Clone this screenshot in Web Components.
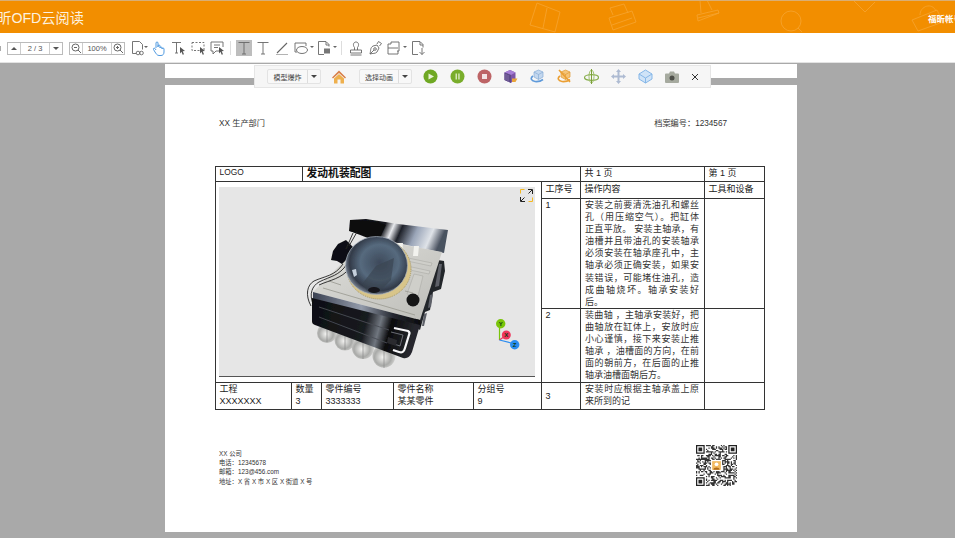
<!DOCTYPE html>
<html lang="zh">
<head>
<meta charset="utf-8">
<title>福昕OFD云阅读</title>
<style>
  html, body { margin: 0; height: 100%; overflow: hidden; }
  body { font-family: "Liberation Sans", "Noto Sans CJK SC", sans-serif; }
</style>
</head>
<body>
<ofd-app>
  <ofd-header slot="top" title-text="福昕OFD云阅读" account="福昕帐号登录"></ofd-header>
  <ofd-toolbar slot="top"></ofd-toolbar>
  <doc-area slot="main">
    <model-toolbar slot="overlay"></model-toolbar>
    <doc-page></doc-page>
  </doc-area>
</ofd-app>

<script>
const FONT = '"Liberation Sans", "Noto Sans CJK SC", sans-serif';

class OfdApp extends HTMLElement {
    constructor() {
        super();
        this.attachShadow({mode: 'open'}).innerHTML = `
        <style>
          :host { display: flex; flex-direction: column; width: 955px; height: 538px; overflow: hidden; font-family: ${FONT}; }
          .main { flex: 1; min-height: 0; }
        </style>
        <slot name="top"></slot>
        <div class="main"><slot name="main"></slot></div>`;
    }
}

class OfdHeader extends HTMLElement {
    constructor() {
        super();
        this.attachShadow({mode: 'open'}).innerHTML = `
        <style>
          :host { display: flex; align-items: center; justify-content: space-between; position: relative; height: 32px;
                  background: #f28e00; border-top: 1px solid #d9ae74; overflow: hidden; color: #fff; }
          .title { font-size: 14.200px; margin-left: -17px; white-space: nowrap; color: #fdf1df; }
          .account { font-size: 8.500px; font-weight: bold; white-space: nowrap; position: absolute; left: 928px; top: 11px; }
          svg { position: absolute; left: 0; top: -1px; }
        </style>
        <svg width="955" height="33" fill="none" stroke="#f6a531" stroke-width=".8">
          <path d="M537 3 560 12 555 32 530 25ZM547 8 543 28"/>
          <path d="M609 18 632 11 636 22 613 30ZM613 15 610 8 624 4 628 13M612 25 632 18"/>
          <path d="M697 15 718 10 719 13 698 21ZM698 18 719 13M701 13 700 0M712 10 707 0"/>
          <circle cx="791" cy="21" r="10"/><path d="M798 28 802 32"/>
          <path d="M853 0 865 12 875 2"/>
          <path d="M912 20 937 10 943 22 918 31ZM920 15C920 6 932 2 936 11"/>
        </svg>
        <span class="title">${this.getAttribute('title-text')}</span>
        <span class="account">${this.getAttribute('account')}</span>`;
    }
}

const CURSOR = '<path fill="#555" stroke="none" d="M10 7l5 4-2.300.3 1.300 3-1.300.5-1.200-3L10 13.500z"/>';
const ICON = {
    link: '<path d="M1.500 1.500h7l3 3v5M1.500 1.500v12h3.500"/><circle cx="7" cy="13" r="1.800"/><circle cx="10.500" cy="13" r="1.800"/>',
    hand: '<path stroke="#3d8fdc" d="M5 8V3a1 1 0 0 1 2 0v4M7 7V6a1 1 0 0 1 2 0v2M9 8a1 1 0 0 1 2 0v1M11 9a1 1 0 0 1 2 0v3c0 2-1 3.500-3 3.500H8c-2 0-3-2-4-3.500L2.500 9.500C2 8.500 3 7.700 4 8.500L5 10"/>',
    textSel: '<path d="M2 2.500h9M6.500 2.500V13M5 13h3"/>' + CURSOR,
    boxSel: '<path stroke-dasharray="2 1.500" d="M2 2.500h12v8H2z"/>' + CURSOR,
    comment: '<path d="M2 2h12v5M10 11H7l-3 3v-3H2V2"/><path d="M5 5h6M5 7.500h4"/>' + CURSOR,
    textBig: '<path d="M2.500 2.500h11M8 2.500V14M6 14h4"/>',
    pen: '<path stroke-width="1.100" d="M3 13 13 3"/><path stroke="#aaa" d="M2 14.500h12"/>',
    shape: '<path d="M2 3h11v3M2 3v9h2"/><ellipse cx="9" cy="10" rx="5.500" ry="3.500"/>',
    docStamp: '<path d="M8 14.500H2.500V1.500H10l3 3v2"/><path d="M10 2v3h3"/><path fill="#777" stroke="none" d="M8 8.500h6v5H8z"/>',
    stamp: '<path d="M6.500 7.500C4.500 5 5.500 2 8 2s3.500 3 1.500 5.500V10M6.500 7.500V10"/><path d="M2.500 10h11v3h-11zM2.500 15h11"/>',
    sign: '<path d="M3 14c1-4 0-6 3-8l4-1 2 3-2 4c-2 2-4 1-7 2z"/><circle cx="8" cy="9" r="1.300"/><path d="M10 4l1.500-2.500 3 2-2 2.500M3 14l4-4"/>',
    attach: '<path d="M5 4H2v10h10v-3M5 4V2h8v9h-2"/><path d="M2 8h10"/>',
    docDown: '<path d="M8 14.500H2.500V1.500H10l3 3v3"/><path d="M10 2v3h3"/><path d="M12 8v6.500M9.500 12l2.500 2.500 2.500-2.500"/>'
};

class ToolIcon extends HTMLElement {
    constructor() {
        super();
        const name = this.getAttribute('name');
        const caret = this.hasAttribute('caret');
        this.attachShadow({mode: 'open'}).innerHTML = `
        <style>
          :host { display: flex; align-items: center; height: 16px; flex: none; }
          svg { display: block; }
          .caret { width: 0; height: 0; border: 2px solid transparent; border-top: 2px solid #666; border-bottom: 0; margin: 0 0 3px 1px; }
          :host([name="link"]) .caret { margin-left: -3px; }
          :host([active]) svg { background: #bdbdbd; }
        </style>
        <svg width="16" height="16" viewBox="0 0 16 16" fill="none" stroke="#666" stroke-width=".9">${ICON[name]}</svg>
        ${caret ? '<span class="caret"></span>' : ''}`;
    }
}

class OfdToolbar extends HTMLElement {
    constructor() {
        super();
        this.attachShadow({mode: 'open'}).innerHTML = `
        <style>
          :host { display: flex; align-items: center; height: 30px; box-sizing: border-box; background: #fff; border-bottom: 1px solid #e3e3e3; padding-top: 1px; flex: none; font-size: 7.500px; color: #555; }
          .sliver { width: 1px; height: 5px; background: #aaa; margin-right: 6px; }
          .spin { display: flex; align-items: stretch; height: 13px; width: 56px; border: 1px solid #bbb; box-sizing: border-box; }
          .spin + .spin { margin-left: 6px; }
          .spin > * { display: flex; align-items: center; justify-content: center; }
          .spin .v { flex: 1; border-left: 1px solid #ccc; border-right: 1px solid #ccc; }
          .spin .b { width: 12px; flex: none; }
          .up { width: 0; height: 0; border: 3px solid transparent; border-bottom: 3px solid #555; border-top: 0; }
          .dn { width: 0; height: 0; border: 3px solid transparent; border-top: 3px solid #555; border-bottom: 0; }
          .sep { width: 1px; height: 14px; background: #ddd; flex: none; }
          tool-icon { margin-left: 3px; }
          .b svg { display: block; }
        </style>
        <span class="sliver"></span>
        <div class="spin"><span class="b"><i class="up"></i></span><span class="v">2 / 3</span><span class="b"><i class="dn"></i></span></div>
        <div class="spin">
          <span class="b"><svg width="10" height="10" fill="none" stroke="#666"><circle cx="4.500" cy="4.500" r="3.500"/><path d="M7 7l3 3M3 4.500h3"/></svg></span>
          <span class="v">100%</span>
          <span class="b"><svg width="10" height="10" fill="none" stroke="#666"><circle cx="4.500" cy="4.500" r="3.500"/><path d="M7 7l3 3M3 4.500h3M4.500 3v3"/></svg></span>
        </div>
        <tool-icon name="link" caret style="margin-left:6px"></tool-icon>
        <tool-icon name="hand" style="margin-left:3px"></tool-icon>
        <tool-icon name="textSel"></tool-icon>
        <tool-icon name="boxSel" style="margin-left:4px"></tool-icon>
        <tool-icon name="comment"></tool-icon>
        <span class="sep" style="margin-left:5px"></span>
        <tool-icon name="textBig" active style="margin-left:5px"></tool-icon>
        <tool-icon name="textBig"></tool-icon>
        <tool-icon name="pen"></tool-icon>
        <tool-icon name="shape" caret></tool-icon>
        <tool-icon name="docStamp" caret style="margin-left:2px"></tool-icon>
        <span class="sep" style="margin-left:4px"></span>
        <tool-icon name="stamp" style="margin-left:6px"></tool-icon>
        <tool-icon name="sign"></tool-icon>
        <tool-icon name="attach" caret></tool-icon>
        <tool-icon name="docDown" style="margin-left:3px"></tool-icon>`;
    }
}

class DocArea extends HTMLElement {
    constructor() {
        super();
        this.attachShadow({mode: 'open'}).innerHTML = `
        <style>
          :host { display: block; position: relative; height: 100%; background: #a9a9a9; overflow: hidden; }
          .prev { width: 632px; height: 14px; margin: 1px 0 7px 165px; background: #fff; }
          ::slotted(doc-page) { margin-left: 165px; }
          ::slotted(model-toolbar) { position: absolute; left: 254px; top: 2px; z-index: 2; }
        </style>
        <slot name="overlay"></slot>
        <div class="prev"></div>
        <slot></slot>`;
    }
}

class ModelToolbar extends HTMLElement {
    constructor() {
        super();
        this.attachShadow({mode: 'open'}).innerHTML = `
        <style>
          :host { display: flex; align-items: center; width: 457px; height: 23px; box-sizing: border-box; background: #f6f6f6; border: 1px solid #e6e6e6; padding-left: 12px; font-size: 7px; color: #444; }
          .drop { display: flex; align-items: stretch; height: 15px; border: 1px solid #e3e3e3; border-radius: 2px; background: #f8f8f8; flex: none; box-sizing: border-box; }
          .drop span { display: flex; align-items: center; justify-content: center; }
          .drop .t { width: 39px; }
          .drop .c { width: 12px; border-left: 1px solid #ddd; }
          .drop i { width: 0; height: 0; border: 3px solid transparent; border-top: 3px solid #444; border-bottom: 0; }
          svg { display: block; flex: none; margin-left: 12px; }
        </style>
        <div class="drop"><span class="t">模型爆炸</span><span class="c"><i></i></span></div>
        <svg width="14" height="14" viewBox="0 0 14 14" style="margin-left:11px"><path fill="#d9804a" d="M7 .5 0 7.500l1 1L7 3l6 5.500 1-1z"/><path fill="#eeb04e" d="M2 8.500 7 4l5 4.500V13.500H8.500V9.500h-3v4H2z"/></svg>
        <div class="drop" style="margin-left:13px"><span class="t" style="width:38px">选择动画</span><span class="c"><i></i></span></div>
        <svg width="15" height="15" viewBox="0 0 15 15" style="margin-left:11px"><circle cx="7.500" cy="7.500" r="7" fill="#6fa823"/><path fill="#e8f2d6" d="M5.500 4.500 11 7.500 5.500 10.500z"/></svg>
        <svg width="15" height="15" viewBox="0 0 15 15"><circle cx="7.500" cy="7.500" r="7" fill="#79ad2b"/><path fill="#d5e6b8" d="M5.500 4.500H7v6H5.500zM8.200 4.500h1.500v6H8.200z"/></svg>
        <svg width="15" height="15" viewBox="0 0 15 15"><circle cx="7.500" cy="7.500" r="7" fill="#bd6466"/><path fill="#f3e4e4" d="M5 5h5v5H5z"/></svg>
        <svg width="15" height="15" viewBox="0 0 15 15" style="margin-left:11px"><path fill="#7d55a8" d="M1.500 3.500 7 1l5.500 2.500v6L8 14l-6.500-3z"/><path fill="#a67ed6" d="M1.500 3.500 7 1l5.500 2.500L8 6z"/><path fill="#5d4a86" d="M8 6v8l-6.500-3V3.500z"/><path stroke="#9d86bd" stroke-width=".6" d="M3 5v6M5 6v7"/><path fill="#e9a53d" d="M9 9.500h5.500l-2 3.500H9z"/></svg>
        <svg width="15" height="15" viewBox="0 0 15 15" fill="none"><path fill="#c3d7ee" stroke="#87acd6" stroke-width=".7" d="M4 3 8.500 1 13 3v5l-4.500 2.500L4 8z"/><path stroke="#87acd6" stroke-width=".7" d="M4 3l4.500 2.500L13 3M8.500 5.500v5"/><path stroke="#5f9ada" stroke-width="1.600" d="M3 7c-3 2-2 5 2 5.500 3 .3 6-.5 8-2"/></svg>
        <svg width="15" height="15" viewBox="0 0 15 15" fill="none"><path fill="#f5c478" stroke="#e09a32" stroke-width=".7" d="M4 3 8.500 1 13 3v5l-4.500 2.500L4 8z"/><path stroke="#e09a32" stroke-width=".7" d="M4 3l4.500 2.500L13 3M8.500 5.500v5"/><path stroke="#eb9f32" stroke-width="1.600" d="M3 7c-3 2-2 5 2 5.500 3 .3 6-.5 8-2M2 1l11 12"/></svg>
        <svg width="15" height="15" viewBox="0 0 15 15" fill="none"><ellipse cx="7.500" cy="8.500" rx="7" ry="2.800" stroke="#86ad4b" stroke-width="1.200"/><ellipse cx="7.500" cy="7.500" rx="2.500" ry="6.500" stroke="#a1c06f"/><path stroke="#7ba038" d="M7.500 0v15"/></svg>
        <svg width="15" height="15" viewBox="0 0 15 15"><path fill="#aebbd2" d="M7.500 0 10 3H8.500v3.500H12V5l3 2.500-3 2.500V8.500H8.500V12H10l-2.500 3L5 12h1.500V8.500H3V10L0 7.500 3 5v1.500h3.500V3H5z"/></svg>
        <svg width="15" height="15" viewBox="0 0 15 15" fill="none"><path fill="#cfe3f7" stroke="#86b7e8" d="M7.500 1 14 5v5l-6.500 4L1 10V5z"/><path stroke="#86b7e8" d="M1 5l6.500 4L14 5M7.500 9v5"/></svg>
        <svg width="14" height="12" viewBox="0 0 14 12"><path fill="#a6aa9f" d="M1 2.500h3L5 .5h4l1 2h3a1 1 0 0 1 1 1V11a1 1 0 0 1-1 1H1a1 1 0 0 1-1-1V3.500a1 1 0 0 1 1-1z"/><circle cx="7" cy="7" r="2.500" fill="#4d4f49"/></svg>
        <svg width="8" height="8" viewBox="0 0 8 8" style="margin-left:12px" stroke="#333" stroke-width="1"><path d="M1 1l6 6M7 1 1 7"/></svg>`;
    }
}

class EngineViewer extends HTMLElement {
    constructor() {
        super();
        this.attachShadow({mode: 'open'}).innerHTML = `
        <style>
          :host { display: block; width: 316px; height: 190px; background: #e6e6e6; border-bottom: 1px solid #555; box-sizing: border-box; }
          svg { display: block; }
          text { font: bold 6px ${FONT}; fill: #0b3b12; text-anchor: middle; }
        </style>
        <svg width="316" height="189" viewBox="219 187 316 189" fill="none">
          <defs>
            <filter id="soft"><feGaussianBlur stdDeviation=".35"/></filter>
            <linearGradient id="plate" x1="0" x2="1" y1="0" y2=".15"><stop offset="0" stop-color="#0c0c0f"/><stop offset=".38" stop-color="#16171c"/><stop offset=".47" stop-color="#e8eaee"/><stop offset=".56" stop-color="#1d2028"/><stop offset=".72" stop-color="#9aa5b8"/><stop offset=".88" stop-color="#dfe3e8"/><stop offset="1" stop-color="#4a5260"/></linearGradient>
            <linearGradient id="front" x1="0" x2="1" y1="0" y2=".15"><stop offset="0" stop-color="#0d0e11"/><stop offset=".55" stop-color="#191b20"/><stop offset=".68" stop-color="#70767f"/><stop offset=".78" stop-color="#0b0b0d"/><stop offset="1" stop-color="#26282d"/></linearGradient>
            <linearGradient id="edge" x1="0" x2="1" y1="0" y2="0"><stop offset="0" stop-color="#3b4252"/><stop offset=".45" stop-color="#939baa"/><stop offset=".75" stop-color="#23262e"/><stop offset="1" stop-color="#0b0b0e"/></linearGradient>
            <radialGradient id="dome" cx=".55" cy=".45" r=".62"><stop offset="0" stop-color="#3e4a5b"/><stop offset=".5" stop-color="#566a7e"/><stop offset=".78" stop-color="#323a48"/><stop offset="1" stop-color="#a9b4c3"/></radialGradient>
            <radialGradient id="bulb" cx=".45" cy=".55" r=".6"><stop offset="0" stop-color="#f3f3f1"/><stop offset=".6" stop-color="#a9aaa8"/><stop offset="1" stop-color="#dcdcda"/></radialGradient>
            <linearGradient id="deck" x1="0" x2="1" y1="0" y2="1"><stop offset="0" stop-color="#e0e0dc"/><stop offset="1" stop-color="#bdbdb8"/></linearGradient>
          </defs>
          <g filter="url(#soft)">
            <circle cx="327" cy="333" r="10" fill="url(#bulb)"/><circle cx="345" cy="340" r="10.500" fill="url(#bulb)"/>
            <circle cx="363" cy="348" r="11" fill="url(#bulb)"/><circle cx="384" cy="356" r="11.500" fill="url(#bulb)"/>
            <path stroke="#8a8b8a" stroke-width=".7" d="M327 324v18M345 331v19M363 338v21M384 346v22"/>
            <path fill="#24262b" d="M438 260l6 1 1 10-4 18-8 3-3 18-5 2-5 18-6-4 12-70z"/>
            <path fill="#5d6067" d="M439 264l3 0-3 22-4 1zM430 295l3-1-2 13-3 1zM424 314l3-1-3 13-2 0z"/>
            <path fill="url(#plate)" d="M350 220l16-1 32 5 50 6-4 23-28-6-46-10-21-6z"/>
            <path fill="#0c0d10" d="M350 220l28 2 8 3-8 17-28-11z"/>
            <path fill="url(#deck)" d="M367 238l75 14-22 68-107-28z"/>
            <path fill="#f2f2ee" d="M398 243h5l-1 10h-5zM414 246h5l-1 10h-5z"/>
            <path fill="#cfcfca" stroke="#9a9a96" stroke-width=".4" d="M408 258l24 5-1 3-24-5zM407 266l23 5-1 3-24-5zM414 274l9 2-5 20-11-2z"/>
            <path stroke="#98988f" stroke-width=".8" d="M323 288l92 27M329 281l12 4M405 291l8 2"/>
            <path fill="#101114" d="M346 240l-8 4-5 7-2 9 6 1 5 3 6-6 6-10z"/>
            <path stroke="#222" stroke-width=".9" d="M353 233l-7 16M357 232l-8 14M343 264c-8 12-18 12-29 17-7 4-9 14-3 25M347 264c-8 12-16 12-28 18-7 4-10 12-6 22M350 268c-9 11-20 12-31 17"/>
            <ellipse cx="379" cy="269" rx="32" ry="30" fill="#d8c58a" stroke="#a99a63" stroke-dasharray="1 1"/>
            <ellipse cx="376.500" cy="265.500" rx="31" ry="29" fill="url(#dome)" stroke="#a7b1bf" stroke-width=".7"/>
            <path fill="#39424f" opacity=".6" d="M362 284l14-18 18-8-3 22-10 10-14 1z"/>
            <path fill="#c5cfdb" d="M352 270l4-1 1 6-3 2z"/>
            <ellipse cx="374" cy="290" rx="6" ry="3" fill="#15171b"/>
            <circle cx="413" cy="300" r="6.500" fill="#121214"/>
            <path fill="url(#edge)" d="M313 292l107 28 1 6-108-26z"/>
            <path fill="url(#front)" d="M312 298l108 27-8 27c-2 5-5 7-9 6l-88-33c-3-1-3-3-3-5z"/>
            <path stroke="#4a4d55" stroke-width=".9" d="M319 307l70 23M319 317l68 26"/>
            <path stroke="#f6f6f8" stroke-width="2.200" d="M394 328l14 3c2 1 2 2 1 4l-4 13c-1 4-3 5-6 4l-6-2"/>
            <path stroke="#7f838b" stroke-width=".8" d="M391 332l12 3-3 11-9-3"/>
            <path fill="#2a2b2f" d="M388 337l9 3-1 6-9-3z"/>
          </g>
          <path stroke="#f5b921" d="M524.500 189.500h-4v4M528.500 201.500h4v-4"/>
          <path stroke="#222" d="M528 189.500h4.500v4.500M532 190l-3.500 3.500M525 201.500h-4.500V197M521 201l3.500-3.500"/>
          <path stroke="#7ac50a" stroke-width="1.200" d="M499.500 340V328"/>
          <path stroke="#f0365c" stroke-width="1.200" d="M499.500 340 505 336"/>
          <path stroke="#2a8cf0" stroke-width="1.200" d="M499.500 340 511 343"/>
          <circle cx="500.700" cy="323.700" r="4.700" fill="#7ac50a"/><text x="500.700" y="326">Y</text>
          <circle cx="506.300" cy="335" r="4.500" fill="#f0365c"/><text x="506.300" y="337.200">X</text>
          <circle cx="514.700" cy="344.700" r="4.700" fill="#2a8cf0"/><text x="514.700" y="347">Z</text>
        </svg>`;
    }
}

// one block per printed line, the document breaks them at fixed places
const lines = (arr) => arr.map((t, i) => `<div class="${i < arr.length - 1 ? 'l' : ''}">${t}</div>`).join('');

class AssemblyTable extends HTMLElement {
    constructor() {
        super();
        this.attachShadow({mode: 'open'}).innerHTML = `
        <style>
          :host { display: block; width: 549px; font-size: 9px; color: #222; }
          table { border-collapse: collapse; table-layout: fixed; width: 549px; border: 1px solid #333; }
          td { border: 1px solid #333; padding: 0 3.500px; vertical-align: top; line-height: 12.100px; box-sizing: border-box; overflow: hidden; }
          .head td { height: 15px; line-height: 13px; }
          .head .logo { font-size: 8.400px; line-height: 10px; }
          .head .title { font-size: 10.800px; font-weight: bold; color: #111; }
          .cols td { height: 17px; padding-top: 1px; }
          .cols .view { padding: 5px 6px 0 3px; }
          .txt { padding: 0 5px 0 4px; color: #333; }
          .l { text-align: justify; text-align-last: justify; }
          .foot td { height: 27px; }
          .mid { vertical-align: middle; }
        </style>
        <table>
          <colgroup><col style="width:76px"><col style="width:11px"><col style="width:19px"><col style="width:72px"><col style="width:80px"><col style="width:68px"><col style="width:39px"><col style="width:124px"><col style="width:60px"></colgroup>
          <tr class="head"><td colspan="2" class="logo">LOGO</td><td colspan="5" class="title">发动机装配图</td><td>共 1 页</td><td>第 1 页</td></tr>
          <tr class="cols"><td colspan="6" rowspan="3" class="view"><engine-viewer></engine-viewer></td><td>工序号</td><td>操作内容</td><td>工具和设备</td></tr>
          <tr style="height:109px"><td>1</td><td class="txt">${lines(['安装之前要清洗油孔和螺丝', '孔（用压缩空气）。把缸体', '正直平放。 安装主轴承，有', '油槽并且带油孔的安装轴承', '必须安装在轴承座孔中，主', '轴承必须正确安装，如果安', '装错误，可能堵住油孔，造', '成曲轴烧坏。轴承安装好', '后。'])}</td><td></td></tr>
          <tr style="height:74px"><td>2</td><td class="txt">${lines(['装曲轴 ，主轴承安装好，把', '曲轴放在缸体上，安放时应', '小心谨慎，接下来安装止推', '轴承 ，油槽面的方向，在前', '面的朝前方，在后面的止推', '轴承油槽面朝后方。'])}</td><td></td></tr>
          <tr class="foot"><td>工程<br>XXXXXXX</td><td colspan="2">数量<br>3</td><td>零件编号<br>3333333</td><td>零件名称<br>某某零件</td><td>分组号<br>9</td><td class="mid">3</td><td class="txt">${lines(['安装时应根据主轴承盖上原', '来所到的记'])}</td><td></td></tr>
        </table>`;
    }
}

class QrCode extends HTMLElement {
    constructor() {
        super();
        const n = 33, size = 41;
        let seed = 4711, d = '';
        const inFinder = (x, y) => (x < 8 && y < 8) || (x > n - 9 && y < 8) || (x < 8 && y > n - 9);
        for (let y = 0; y < n; y++) {
            for (let x = 0; x < n; x++) {
                seed = (seed * 1103515245 + 12345) & 0x7fffffff;
                if (!inFinder(x, y) && (seed >> 16) % 2) d += `M${x} ${y}h1v1h-1z`;
            }
        }
        const finder = (x, y) => `M${x} ${y}h7v7h-7zM${x + 1} ${y + 1}v5h5v-5zM${x + 2} ${y + 2}h3v3h-3z`;
        this.attachShadow({mode: 'open'}).innerHTML = `
        <style>:host { display: block; width: ${size}px; height: ${size}px; } svg { display: block; }</style>
        <svg width="${size}" height="${size}" viewBox="0 0 ${n} ${n}">
          <path fill="#333" d="${d}"/>
          <path fill="#222" fill-rule="evenodd" d="${finder(0, 0)}${finder(n - 7, 0)}${finder(0, n - 7)}"/>
          <rect x="12" y="12" width="9" height="9" fill="#fff"/>
          <rect x="13" y="13" width="7" height="7" fill="#f3bb62"/>
          <circle cx="16.500" cy="15.500" r="1.500" fill="#fff"/><path fill="#b06a18" d="M14 20c0-2.500 5-2.500 5 0z"/>
        </svg>`;
    }
}

class DocPage extends HTMLElement {
    constructor() {
        super();
        this.attachShadow({mode: 'open'}).innerHTML = `
        <style>
          :host { display: block; width: 632px; height: 447px; background: #fff; box-sizing: border-box; padding: 33px 34px 0 50px; color: #222; font-family: ${FONT}; }
          .top { display: flex; justify-content: space-between; font-size: 8.200px; line-height: 10px; padding: 0 36px 0 4px; margin-bottom: 38px; position: relative; top: 1px; color: #333; }
          .foot { display: flex; justify-content: space-between; align-items: flex-start; margin-top: 35px; padding: 0 26px 0 4px; font-size: 6.300px; line-height: 9.300px; color: #333; }
          .addr { margin-top: 4px; }
        </style>
        <div class="top"><span>XX 生产部门</span><span>档案编号：1234567</span></div>
        <assembly-table></assembly-table>
        <div class="foot">
          <div class="addr">XX 公司<br>电话：12345678<br>邮箱：123@456.com<br>地址：X 省 X 市 X 区 X 街道 X 号</div>
          <qr-code></qr-code>
        </div>`;
    }
}

customElements.define('tool-icon', ToolIcon);
customElements.define('ofd-header', OfdHeader);
customElements.define('ofd-toolbar', OfdToolbar);
customElements.define('model-toolbar', ModelToolbar);
customElements.define('engine-viewer', EngineViewer);
customElements.define('assembly-table', AssemblyTable);
customElements.define('qr-code', QrCode);
customElements.define('doc-page', DocPage);
customElements.define('doc-area', DocArea);
customElements.define('ofd-app', OfdApp);
</script>
</body>
</html>
